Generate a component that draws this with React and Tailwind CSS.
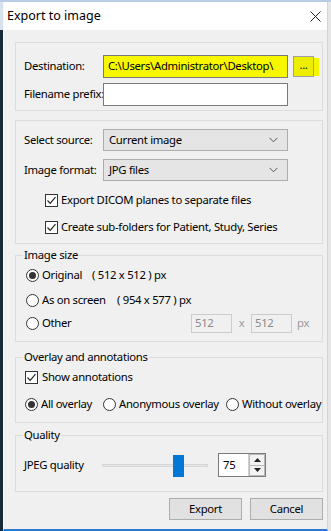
import React from "react";

const font = { fontFamily: '"Noto Sans", "Open Sans", sans-serif' };

function Check({ className = "" }) {
  return (
    <span className={"flex h-[13px] w-[13px] shrink-0 items-center justify-center border border-[#333] bg-white " + className}>
      <svg width="11" height="11" viewBox="0 0 11 11">
        <polyline points="1.5,5.5 4.2,8.3 9.5,2.2" fill="none" stroke="#222" strokeWidth="1.2" />
      </svg>
    </span>
  );
}

function Radio({ on }) {
  return (
    <span className="flex h-[13px] w-[13px] shrink-0 items-center justify-center rounded-full border border-[#333] bg-white">
      {on && <span className="h-[7px] w-[7px] rounded-full bg-[#333]" />}
    </span>
  );
}

function Chevron() {
  return (
    <svg width="9" height="6" viewBox="0 0 9 6">
      <polyline points="0.5,0.8 4.5,4.8 8.5,0.8" fill="none" stroke="#555" strokeWidth="1" />
    </svg>
  );
}

function Combo({ text }) {
  return (
    <div className="flex h-[22px] w-[185px] shrink-0 items-center justify-between border border-[#adadad] bg-[#e5e5e5] pl-[5px] pr-[9px]">
      <span>{text}</span>
      <Chevron />
    </div>
  );
}

function Group({ title, className = "", children }) {
  return (
    <div className={"relative ml-[11px] w-[308px] shrink-0 border border-[#dcdcdc] " + className}>
      {title && (
        <span className="absolute left-[7px] top-[-9px] bg-[#f0f0f0] px-[1px] leading-[16px]">{title}</span>
      )}
      {children}
    </div>
  );
}

export default function App() {
  return (
    <div className="h-[531px] w-[331px] overflow-hidden whitespace-nowrap bg-[#f0f0f0] text-[11.3px] tracking-[-0.3px] text-black" style={font}>
      <div className="h-[2px] w-full bg-[#b8cde3]" />
      <div className="flex h-[529px]">
        <div className="flex w-[3px] flex-col">
          <div className="h-[28px] bg-[#d6e2ee]" />
          <div className="flex-1 bg-[#18293a]" />
        </div>
        <div className="flex w-[325px] flex-col border-b-[2px] border-l border-r border-b-[#2b79d0] border-l-[#fafafa] border-r-[#d4d4d4]">
          <div className="flex h-[28px] shrink-0 items-center justify-between bg-white pl-[3px] pr-[6px]">
            <span className="text-[12.5px] tracking-normal">Export to image</span>
            <svg width="11" height="11" viewBox="0 0 11 11">
              <path d="M0.5 0.5 L10.5 10.5 M10.5 0.5 L0.5 10.5" stroke="#222" strokeWidth="1" />
            </svg>
          </div>

          {/* Group 1 */}
          <Group className="mt-[12px] h-[69px] pl-[8px] pt-[12px]">
            <div className="flex h-[23px] items-center">
              <span className="w-[79px] shrink-0">Destination:</span>
              <div className="flex h-[23px] w-[185px] shrink-0 items-center border border-[#7a7a7a] bg-[#f7f700] pl-[4px]">
                C:\Users\Administrator\Desktop\
              </div>
              <div className="ml-[5px] flex h-[21px] w-[21px] shrink-0 items-center justify-center border border-[#a0a0a0] bg-[#eded00] pb-[3px]">
                ...
              </div>
              <div className="h-[18px] w-[5px] shrink-0 bg-[#f5f500]" />
            </div>
            <div className="mt-[5px] flex h-[23px] items-center">
              <span className="w-[79px] shrink-0">Filename prefix:</span>
              <div className="h-[23px] w-[185px] shrink-0 border border-[#7a7a7a] bg-white" />
            </div>
          </Group>

          {/* Group 2 */}
          <Group className="mt-[9px] h-[124px] pl-[8px] pt-[8px]">
            <div className="flex h-[22px] items-center">
              <span className="w-[79px] shrink-0">Select source:</span>
              <Combo text="Current image" />
            </div>
            <div className="mt-[8px] flex h-[22px] items-center">
              <span className="w-[79px] shrink-0">Image format:</span>
              <Combo text="JPG files" />
            </div>
            <div className="mt-[9px] flex h-[20px] items-center pl-[21px]">
              <Check />
              <span className="ml-[3px]">Export DICOM planes to separate files</span>
            </div>
            <div className="mt-[7px] flex h-[20px] items-center pl-[21px]">
              <Check />
              <span className="ml-[3px]">Create sub-folders for Patient, Study, Series</span>
            </div>
          </Group>

          {/* Group 3 */}
          <Group title="Image size" className="mt-[11px] h-[87px] pl-[10px] pt-[11px]">
            <div className="flex h-[16px] items-center">
              <Radio on />
              <span className="ml-[3px] w-[50px] shrink-0">Original</span>
              <span>( 512 x 512 ) px</span>
            </div>
            <div className="mt-[9px] flex h-[16px] items-center">
              <Radio />
              <span className="ml-[3px] w-[75px] shrink-0">As on screen</span>
              <span>( 954 x 577 ) px</span>
            </div>
            <div className="mt-[6px] flex h-[19px] items-center">
              <Radio />
              <span className="ml-[3px] w-[149px] shrink-0">Other</span>
              <div className="flex h-[19px] w-[41px] shrink-0 items-center border border-[#cccccc] bg-[#f0f0f0] pl-[3px] text-[#8a8a8a]">512</div>
              <span className="w-[19px] shrink-0 text-center text-[#9a9a9a]">x</span>
              <div className="flex h-[19px] w-[41px] shrink-0 items-center border border-[#cccccc] bg-[#f0f0f0] pl-[3px] text-[#8a8a8a]">512</div>
              <span className="ml-[5px] text-[#9a9a9a]">px</span>
            </div>
          </Group>

          {/* Group 4 */}
          <Group title="Overlay and annotations" className="mt-[15px] h-[66px] pl-[9px] pt-[11px]">
            <div className="flex h-[16px] items-center">
              <Check />
              <span className="ml-[4px]">Show annotations</span>
            </div>
            <div className="mt-[11px] flex h-[16px] items-center">
              <Radio on />
              <span className="ml-[3px] w-[62px] shrink-0">All overlay</span>
              <Radio />
              <span className="ml-[3px] w-[107px] shrink-0">Anonymous overlay</span>
              <Radio />
              <span className="ml-[3px]">Without overlay</span>
            </div>
          </Group>

          {/* Group 5 */}
          <Group title="Quality" className="mt-[12px] h-[57px] pl-[8px] pt-[17px]">
            <div className="flex h-[24px] items-center">
              <span className="w-[78px] shrink-0">JPEG quality</span>
              <div className="relative flex h-[24px] w-[106px] shrink-0 items-center">
                <div className="h-[3px] w-full border border-[#d6d6d6] bg-[#e7e7e7]" />
                <div className="absolute left-[71px] top-[2px] h-[22px] w-[11px] bg-[#0078d7]" />
              </div>
              <div className="ml-[10px] flex h-[24px] w-[48px] shrink-0 border border-[#7a7a7a] bg-white">
                <span className="flex flex-1 items-center pl-[4px]">75</span>
                <div className="flex w-[17px] flex-col border-l border-[#d0d0d0]">
                  <div className="flex flex-1 items-center justify-center border border-[#b9b9b9] bg-[#f3f3f3]">
                    <svg width="7" height="4" viewBox="0 0 7 4"><polygon points="0,4 3.5,0 7,4" fill="#222" /></svg>
                  </div>
                  <div className="flex flex-1 items-center justify-center border border-t-0 border-[#b9b9b9] bg-[#f3f3f3]">
                    <svg width="7" height="4" viewBox="0 0 7 4"><polygon points="0,0 3.5,4 7,0" fill="#222" /></svg>
                  </div>
                </div>
              </div>
            </div>
          </Group>

          <div className="mt-[6px] flex justify-end gap-[8px] pr-[4px]">
            <div className="flex h-[22px] w-[73px] items-center justify-center border border-[#adadad] bg-[#e1e1e1]">Export</div>
            <div className="flex h-[22px] w-[73px] items-center justify-center border border-[#adadad] bg-[#e1e1e1]">Cancel</div>
          </div>
        </div>
        <div className="w-[3px] bg-[#e6e6e6]" />
      </div>
    </div>
  );
}
